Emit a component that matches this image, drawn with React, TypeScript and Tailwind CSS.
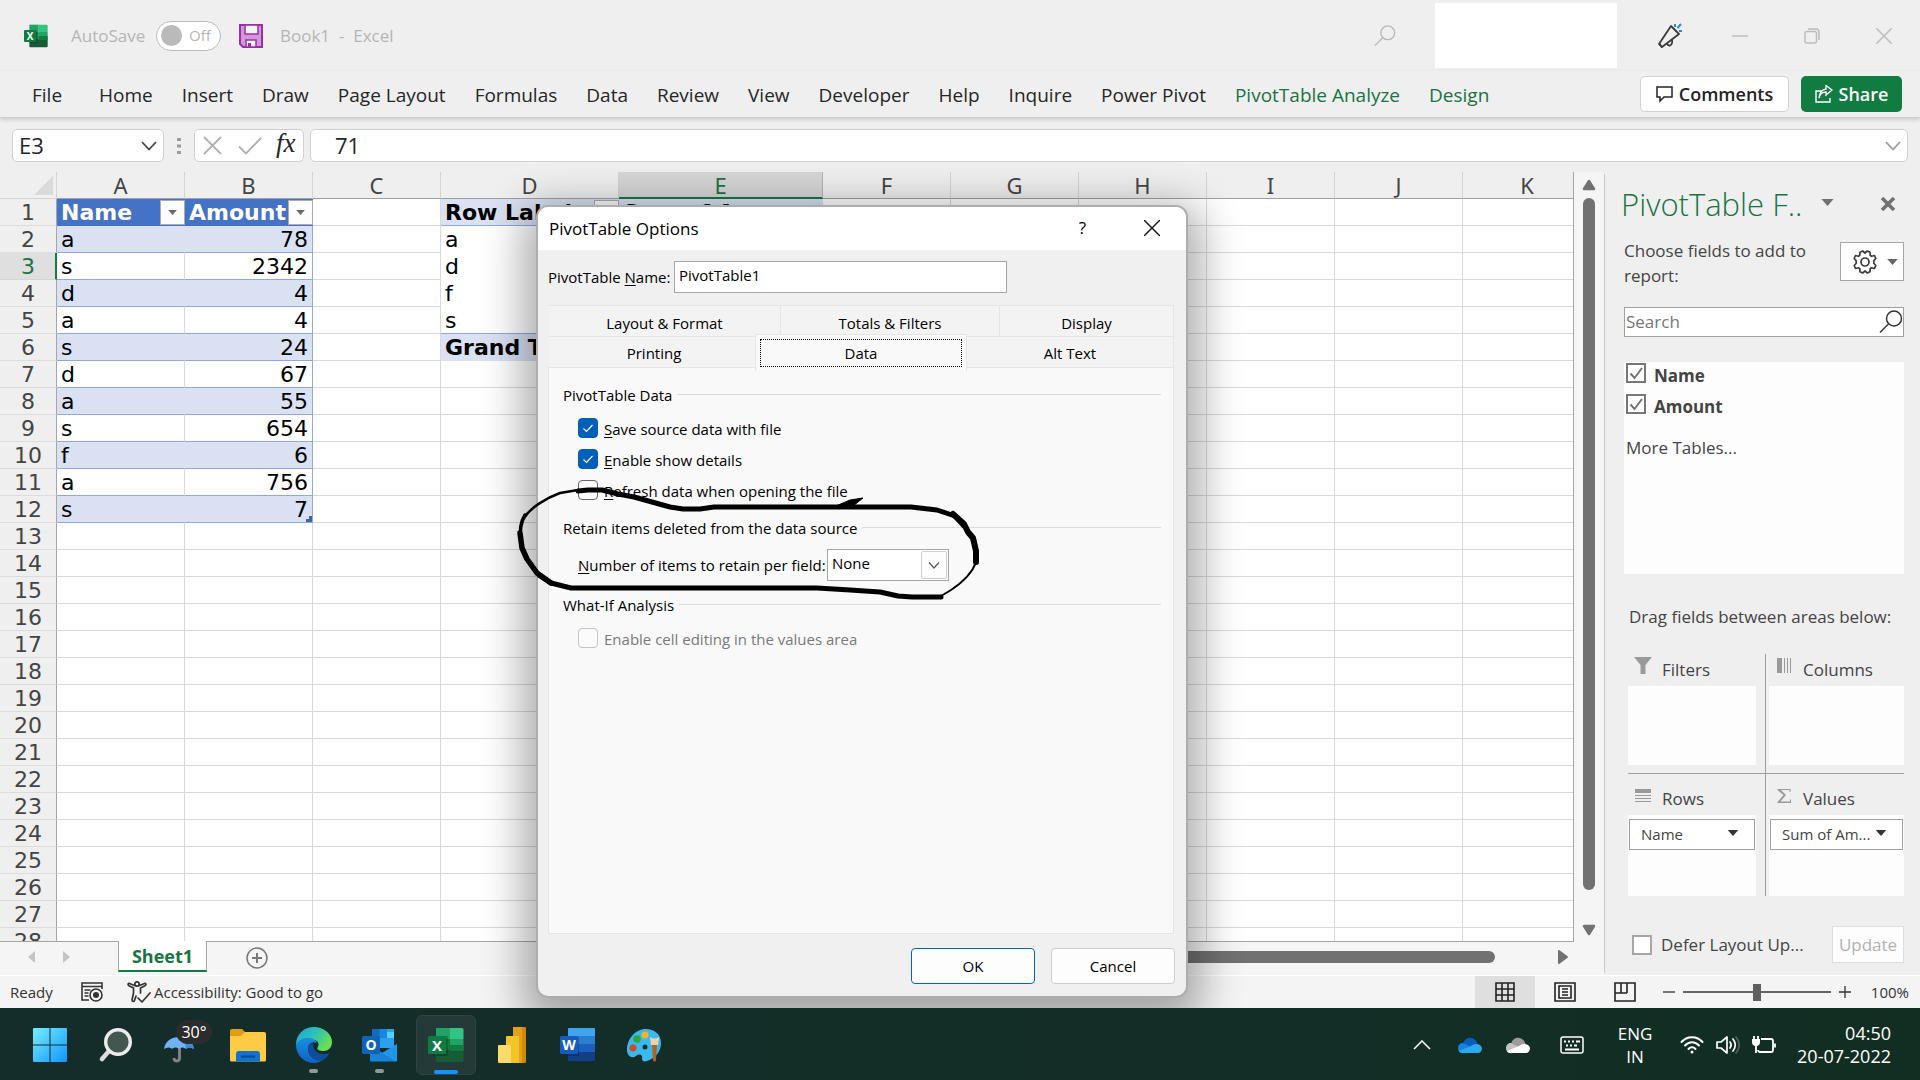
import React from "react";

const UI = "font-['Open_Sans','Liberation_Sans',sans-serif]";

/* ---------- small glyphs ---------- */

function Triangle({ className = "" }: { className?: string }) {
  return (
    <svg viewBox="0 0 14 8" className={className} aria-hidden="true">
      <path d="M0 0h14L7 8z" fill="currentColor" />
    </svg>
  );
}

function ExcelLogo({ className = "" }: { className?: string }) {
  return (
    <svg viewBox="0 0 36 36" className={className} aria-hidden="true">
      <path d="M8 1h14v11H8z" fill="#21a366" />
      <path d="M22 1h12a1.500 1.500 0 0 1 1.500 1.500V12H22z" fill="#33c481" />
      <path d="M8 12h14v12H8z" fill="#107c41" />
      <path d="M22 12h13.500v11H22z" fill="#21a366" />
      <path d="M8 23h27.500v10.500A1.500 1.500 0 0 1 34 35H9.500A1.500 1.500 0 0 1 8 33.500z" fill="#185c37" />
      <path d="M22 18h13.500v6H22z" fill="#107c41" />
      <rect x="8" y="9" width="12" height="20" fill="#000" opacity=".2" />
      <rect x="0" y="9" width="18" height="18" rx="1.500" fill="#107c41" />
      <text x="9" y="23.500" textAnchor="middle" fontSize="15" fontWeight="700" fill="#fff" fontFamily="Open Sans, sans-serif">
        X
      </text>
    </svg>
  );
}

function SearchGlyph({ className = "" }: { className?: string }) {
  return (
    <svg viewBox="0 0 24 24" className={className} fill="none" stroke="currentColor" strokeWidth="1.500" aria-hidden="true">
      <circle cx="15" cy="8.500" r="7.500" />
      <path d="M9.500 14L1 22.500" />
    </svg>
  );
}

/* ---------- title bar and ribbon ---------- */

function TitleBar() {
  return (
    <header className="flex h-[71px] shrink-0 items-center text-[17px] text-[#b5b5b5]">
      <ExcelLogo className="ml-6 size-6" />
      <span className="ml-[23px] w-[77px] text-[17px]">AutoSave</span>
      <button
        type="button"
        role="switch"
        aria-checked="false"
        aria-label="AutoSave"
        className="ml-2 flex h-[30px] w-[65px] items-center gap-[7px] rounded-full border border-[#bcbcbc] bg-white pl-1 text-[15px]"
      >
        <span className="size-[21px] rounded-full bg-[#bababa]" />
        Off
      </button>
      <button type="button" aria-label="Save" className="ml-[18px]">
        <svg viewBox="0 0 24 24" className="size-6" aria-hidden="true">
          <path d="M1 1h22v22H4l-3-3z" fill="#d595dc" stroke="#9a2fa5" strokeWidth="2" />
          <path d="M6 1h13v9H6z" fill="#f4f4f4" stroke="#9a2fa5" strokeWidth="1.500" />
          <path d="M7 16h10v7H7z" fill="#fff" stroke="#9a2fa5" strokeWidth="1.500" />
          <path d="M9 19h3v4H9z" fill="#9a2fa5" />
        </svg>
      </button>
      <h1 className="ml-[17px] whitespace-pre">Book1  -  Excel</h1>
      <button type="button" aria-label="Search" className="ml-auto mr-[39px]">
        <SearchGlyph className="size-[22px] text-[#b9b9b9]" />
      </button>
      <div className="h-[65px] w-[182px] bg-white" />
      <button type="button" aria-label="Coming soon" className="ml-10">
        <svg viewBox="0 0 26 26" className="size-[26px]" fill="none" stroke="#3b3b3b" strokeWidth="1.800" aria-hidden="true">
          <path d="M14 3l8 8L5 24l-3-3zM2.500 20.500L5 24.500" strokeLinejoin="round" />
          <path d="M10 20.500c1 3.500 6 2.500 5-3.500" />
          <path d="M18 1v3M24 1l-3.500 4M22 8h3" stroke="#2b88d8" strokeWidth="2" />
        </svg>
      </button>
      <button type="button" aria-label="Minimize" className="ml-[49px]">
        <svg viewBox="0 0 16 16" className="size-4" stroke="#bdbdbd" strokeWidth="1.500" aria-hidden="true">
          <path d="M0 8h16" />
        </svg>
      </button>
      <button type="button" aria-label="Restore" className="ml-14">
        <svg viewBox="0 0 16 16" className="size-4" fill="none" stroke="#bdbdbd" strokeWidth="1.500" aria-hidden="true">
          <rect x="1" y="3.500" width="11.500" height="11.500" rx="2" />
          <path d="M4 1h8a3 3 0 0 1 3 3v8" />
        </svg>
      </button>
      <button type="button" aria-label="Close" className="ml-14 mr-7">
        <svg viewBox="0 0 16 16" className="size-4" stroke="#bdbdbd" strokeWidth="1.500" aria-hidden="true">
          <path d="M0 0l16 16M16 0L0 16" />
        </svg>
      </button>
    </header>
  );
}

const RIBBON = [
  "File", "Home", "Insert", "Draw", "Page Layout", "Formulas", "Data", "Review",
  "View", "Developer", "Help", "Inquire", "Power Pivot", "PivotTable Analyze", "Design",
];

function Ribbon() {
  return (
    <nav className="relative z-10 flex h-[47px] shrink-0 items-center border-b border-[#cfcfcf] text-[18px] text-[#262626] shadow-[0_2px_4px_rgba(0,0,0,0.14)]">
      <div className="ml-8 flex gap-[29px] pt-0.5 text-[19px] whitespace-nowrap">
        {RIBBON.map((t, i) => (
          <button key={t} type="button" className={i === 0 ? "mr-2" : i > 12 ? "text-[#197343]" : ""}>
            {t}
          </button>
        ))}
      </div>
      <button
        type="button"
        className="ml-auto flex h-9 w-[149px] items-center justify-center gap-1.5 rounded-[5px] border border-[#d0d0d0] bg-white font-semibold text-[#242424]"
      >
        <svg viewBox="0 0 17 17" className="size-[17px]" fill="none" stroke="#242424" strokeWidth="1.500" aria-hidden="true">
          <path d="M1 1h15v10H8l-4 4v-4H1z" />
        </svg>
        Comments
      </button>
      <button
        type="button"
        className="ml-3 mr-[18px] flex h-9 w-[101px] items-center justify-center gap-1.5 rounded-[5px] bg-[#107c41] font-semibold text-white"
      >
        <svg viewBox="0 0 18 18" className="size-[18px]" fill="none" stroke="#fff" strokeWidth="1.400" aria-hidden="true">
          <path d="M6 6H1v11h14v-4" />
          <path d="M4 13c1-4 3.500-6 7-6V10l6-5-6-4.500V4C6.500 4.500 4.500 8 4 13z" />
        </svg>
        Share
      </button>
    </nav>
  );
}

function FormulaBar() {
  return (
    <div className="flex h-[54px] shrink-0 items-center pt-px pr-3 pl-3 text-[22px] text-[#262626]">
      <button
        type="button"
        className="flex h-[33px] w-[152px] items-center justify-between rounded-[5px] border border-[#d0d0d0] bg-white px-1.5"
      >
        E3
        <svg viewBox="0 0 16 10" className="h-[10px] w-4" fill="none" stroke="#444" strokeWidth="1.800" aria-hidden="true">
          <path d="M1 1l7 7.500L15 1" />
        </svg>
      </button>
      <svg viewBox="0 0 4 16" className="mx-[13px] h-4 w-1" fill="#9b9b9b" aria-hidden="true">
        <path d="M0 0h4v3H0zM0 6.500h4v3H0zM0 13h4v3H0z" />
      </svg>
      <div className="flex h-[33px] w-[110px] items-center gap-4 rounded-[5px] border border-[#d0d0d0] bg-white pl-2">
        <button type="button" aria-label="Cancel entry">
          <svg viewBox="0 0 19 19" className="size-[19px]" stroke="#b0b0b0" strokeWidth="1.800" aria-hidden="true">
            <path d="M1 1l17 17M18 1L1 18" />
          </svg>
        </button>
        <button type="button" aria-label="Enter">
          <svg viewBox="0 0 24 18" className="h-[18px] w-6" fill="none" stroke="#b0b0b0" strokeWidth="1.800" aria-hidden="true">
            <path d="M1 9.500l7 7L23 1" />
          </svg>
        </button>
        <button type="button" className="-ml-0.5 pb-1 font-['Liberation_Serif',serif] text-[27px] leading-none italic">
          fx
        </button>
      </div>
      <div className="ml-[6px] flex h-[33px] flex-1 items-center rounded-[5px] border border-[#d0d0d0] bg-white pl-6 pr-1.5">
        <input aria-label="Formula" defaultValue="71" className="min-w-0 flex-1 bg-transparent outline-none" />
        <svg viewBox="0 0 16 10" className="h-[10px] w-4" fill="none" stroke="#999" strokeWidth="1.800" aria-hidden="true">
          <path d="M1 1l7 7.500L15 1" />
        </svg>
      </div>
    </div>
  );
}

/* ---------- worksheet ---------- */

const COLUMNS = ["A", "B", "C", "D", "E", "F", "G", "H", "I", "J", "K"];
const DATA: Record<number, [string, string]> = {
  2: ["a", "78"], 3: ["s", "2342"], 4: ["d", "4"], 5: ["a", "4"], 6: ["s", "24"], 7: ["d", "67"],
  8: ["a", "55"], 9: ["s", "654"], 10: ["f", "6"], 11: ["a", "756"], 12: ["s", "7"],
};
const PIVOT: Record<number, string> = { 1: "Row Labels", 2: "a", 3: "d", 4: "f", 5: "s", 6: "Grand Total" };

function FilterButton({ label }: { label: string }) {
  return (
    <button
      type="button"
      aria-label={label}
      className="absolute top-px right-0 flex size-[25px] items-center justify-center border border-[#acacac] bg-[#fcfcfc]"
    >
      <Triangle className="h-[5px] w-[9px] text-[#6b6b6b]" />
    </button>
  );
}

function Cell({ row, col }: { row: number; col: string }) {
  if ((col === "A" || col === "B") && row === 1) {
    return (
      <td className="relative border-b border-[#4472c4] bg-[#4472c4] px-1 pt-0.5 pb-0 font-bold text-white">
        {col === "A" ? "Name" : "Amount"}
        <FilterButton label={"Filter column " + col} />
      </td>
    );
  }
  if ((col === "A" || col === "B") && row <= 12) {
    const even = row % 2 === 0;
    const tone = even ? "bg-[#d9e1f2]" : "bg-white";
    if (col === "A") {
      return (
        <td className={`${tone} border-r border-b border-b-[#8ea9db] px-1 pt-0.5 pb-0 ${even ? "border-r-[#d9e1f2]" : "border-r-[#d9d9d9]"}`}>
          {DATA[row][0]}
        </td>
      );
    }
    return (
      <td className={`${tone} relative border-r border-b border-[#8ea9db] px-1 pt-0.5 pb-0 text-right`}>
        {DATA[row][1]}
        {row === 12 && <span className="absolute right-0 bottom-0 size-1.5 bg-[#3f62b5] [clip-path:polygon(50%_0,100%_0,100%_100%,0_100%,0_50%,50%_50%)]" />}
      </td>
    );
  }
  if ((col === "D" || col === "E") && row <= 6) {
    const band = row === 1 || row === 6;
    const edge = row === 1 || row === 5 ? "border-[#8ea9db]" : row === 6 ? "border-[#d9e1f2]" : "border-white";
    return (
      <td className={`relative border-b px-1 pt-0.5 pb-0 ${edge} ${band ? "bg-[#d9e1f2] font-bold" : "bg-white"}`}>
        {col === "D" ? PIVOT[row] : row === 1 ? "Sum of Amount" : ""}
        {col === "D" && row === 1 && <FilterButton label="Filter row labels" />}
      </td>
    );
  }
  return <td className="border-r border-b border-[#d9d9d9] bg-white" />;
}

function Worksheet() {
  return (
    <div className="min-h-0 min-w-0 flex-1 overflow-hidden border-r border-b border-[#a6a6a6]">
      <table className="w-[1592px] table-fixed border-separate border-spacing-0 font-['DejaVu_Sans','Liberation_Sans',sans-serif] text-[22px] leading-[24px] text-black">
        <colgroup>
          <col className="w-[57px]" />
          <col className="w-32" />
          <col className="w-32" />
          <col className="w-32" />
          <col className="w-[178px]" />
          <col className="w-[204px]" />
          <col className="w-32" />
          <col className="w-32" />
          <col className="w-32" />
          <col className="w-32" />
          <col className="w-32" />
          <col />
        </colgroup>
        <thead>
          <tr className="h-[27px] font-['Noto_Sans',sans-serif] text-[#444]">
            <th className="border-r border-b border-[#d4d4d4] bg-[#efefef] p-0">
              <svg viewBox="0 0 19 19" className="mr-[3px] ml-auto size-[19px]" aria-hidden="true">
                <path d="M19 0v19H0z" fill="#dadada" />
              </svg>
            </th>
            {COLUMNS.map((c) => (
              <th
                key={c}
                scope="col"
                className={
                  c === "E"
                    ? "border-r border-b-2 border-r-[#b5b5b5] border-b-[#107c41] bg-[#d6d6d6] p-0 leading-[24px] font-normal text-[#197343]"
                    : "border-r border-b border-r-[#d4d4d4] border-b-[#a0a0a0] bg-[#efefef] p-0 leading-[24px] font-normal"
                }
              >
                {c}
              </th>
            ))}
          </tr>
        </thead>
        <tbody>
          {Array.from({ length: 28 }, (_, i) => i + 1).map((r) => (
            <tr key={r} className="h-[27px] whitespace-nowrap">
              <th
                scope="row"
                className={
                  r === 3
                    ? "border-r-2 border-b border-r-[#107c41] border-b-[#d4d4d4] bg-[#dfdfdf] p-0 pt-0.5 pl-px font-normal text-[#197343]"
                    : "border-r border-b border-r-[#a6a6a6] border-b-[#dcdcdc] bg-[#efefef] p-0 pt-0.5 font-normal text-[#444]"
                }
              >
                {r}
              </th>
              {COLUMNS.map((c) => (
                <Cell key={c} row={r} col={c} />
              ))}
            </tr>
          ))}
        </tbody>
      </table>
    </div>
  );
}

function SheetTabs() {
  return (
    <div className="flex h-[33px] shrink-0 items-start bg-[#f5f5f5]">
      <button type="button" aria-label="Previous sheet" className="mt-[9px] ml-7">
        <svg viewBox="0 0 7 12" className="h-3 w-[7px]" aria-hidden="true"><path d="M7 0v12L0 6z" fill="#c4c4c4" /></svg>
      </button>
      <button type="button" aria-label="Next sheet" className="mt-[9px] ml-7">
        <svg viewBox="0 0 7 12" className="h-3 w-[7px]" aria-hidden="true"><path d="M0 0v12l7-6z" fill="#c4c4c4" /></svg>
      </button>
      <button
        type="button"
        className="relative -mt-px ml-12 h-[31px] w-[89px] border-x border-b-2 border-x-[#a6a6a6] border-b-[#107c41] bg-white text-[18px] leading-[26px] font-bold text-[#197343]"
      >
        Sheet1
      </button>
      <button type="button" aria-label="New sheet" className="mt-[5px] ml-[39px]">
        <svg viewBox="0 0 22 22" className="size-[22px]" fill="none" stroke="#777" strokeWidth="1.500" aria-hidden="true">
          <circle cx="11" cy="11" r="10" />
          <path d="M11 6v10M6 11h10" strokeWidth="2" />
        </svg>
      </button>
      <div className="mt-[9px] ml-[400px] h-3 flex-1 rounded-full bg-[#717171]" />
      <svg viewBox="0 0 10 14" className="mt-2 mr-[36px] ml-[63px] h-[14px] w-[10px] text-[#717171]" aria-hidden="true">
        <path d="M1 1v12l8-6z" fill="currentColor" stroke="currentColor" strokeLinejoin="round" strokeWidth="2" />
      </svg>
    </div>
  );
}

function VerticalScroll() {
  return (
    <div className="ml-[2px] flex w-7 shrink-0 flex-col items-center rounded-t-xl bg-[#f5f5f5] pt-[7px] pr-0.5 pb-[6px] text-[#717171]">
      <svg viewBox="0 0 14 12" className="h-3 w-[14px]" aria-hidden="true">
        <path d="M7 2l5 8H2z" fill="currentColor" stroke="currentColor" strokeLinejoin="round" strokeWidth="2.500" />
      </svg>
      <div className="mt-[7px] w-3 flex-1 rounded-full bg-[#717171]" />
      <svg viewBox="0 0 14 12" className="mt-[34px] h-3 w-[14px]" aria-hidden="true">
        <path d="M2 2h10l-5 8z" fill="currentColor" stroke="currentColor" strokeLinejoin="round" strokeWidth="2.500" />
      </svg>
    </div>
  );
}

/* ---------- field list pane ---------- */

function PaneCheck({ id, label }: { id: string; label: string }) {
  return (
    <div className="flex h-[31px] items-start gap-2 pl-0.5">
      <span className="relative mt-px size-5 shrink-0">
        <input id={id} type="checkbox" defaultChecked className="peer size-5 appearance-none border-2 border-[#777] bg-white" />
        <svg viewBox="0 0 20 20" className="pointer-events-none absolute inset-0 hidden size-5 peer-checked:block" fill="none" stroke="#737373" strokeWidth="2" aria-hidden="true">
          <path d="M4.500 10.500l4 4.500L16 5" />
        </svg>
      </span>
      <label htmlFor={id} className="pt-[3px] text-[17px] leading-[22px] font-bold text-[#444]">{label}</label>
    </div>
  );
}

function AreaTitle({ icon, children }: { icon: React.ReactNode; children: string }) {
  return (
    <h3 className="flex h-8 items-center gap-[10px] pl-1.5 text-[17px] text-[#444]">
      <svg viewBox="0 0 18 18" className="mb-2 size-[18px] text-[#9a9a9a]" aria-hidden="true">{icon}</svg>
      {children}
    </h3>
  );
}

function Chip({ children }: { children: string }) {
  return (
    <button type="button" className="flex h-[31px] w-full items-center justify-between border border-[#a0a0a0] bg-white pr-[15px] pl-[11px] text-[15px] text-[#444]">
      {children}
      <Triangle className="mb-1 h-[6px] w-3 shrink-0 text-[#333]" />
    </button>
  );
}

function FieldPane() {
  return (
    <aside className="flex w-[315px] shrink-0 flex-col bg-[#efefef] pr-4 pl-[19px] text-[#444]">
      <div className="mt-3 flex h-10 items-center">
        <h2 className="-ml-[3px] w-[184px] text-[31px] font-light whitespace-nowrap text-[#197343]">PivotTable F..</h2>
        <Triangle className="mt-[-4px] ml-4 h-[7px] w-[13px] text-[#717171]" />
        <button type="button" aria-label="Close pane" className="mr-[9px] ml-auto">
          <svg viewBox="0 0 14 14" className="size-[14px]" stroke="#717171" strokeWidth="3.500" aria-hidden="true">
            <path d="M1 1l12 12M13 1L1 13" />
          </svg>
        </button>
      </div>
      <div className="mt-[14px] flex items-start justify-between">
        <p className="w-[200px] text-[17px] leading-[25px] whitespace-nowrap">Choose fields to add to<br />report:</p>
        <button type="button" aria-label="Tools" className="mt-1 flex h-[39px] w-16 items-center gap-[10px] border border-[#a6a6a6] bg-white pl-3">
          <svg viewBox="0 0 24 24" className="size-6" fill="none" stroke="#3b3b3b" strokeWidth="1.700" strokeLinejoin="round" aria-hidden="true">
            <path d="M7 2.200L9.700 1l2.300 2 2.300-2L17 2.200l.2 3.200 1.300.9 3-.8 1.300 3-2 2.300v2.400l2 2.300-1.300 3-3-.8-1.300.9-.2 3.200-2.700 1.200-2.300-2-2.300 2L7 21.800l-.2-3.200-1.300-.9-3 .8-1.300-3 2-2.300v-2.400l-2-2.300 1.300-3 3 .8 1.300-.9z" />
            <circle cx="12" cy="12" r="4" />
          </svg>
          <Triangle className="h-[6px] w-[11px] text-[#666]" />
        </button>
      </div>
      <div className="mt-[19px] flex h-[30px] items-center justify-between border border-[#a0a0a0] bg-white">
        <input aria-label="Search fields" placeholder="Search" className="min-w-0 flex-1 bg-transparent pl-px text-[17px] outline-none placeholder:text-[#767676]" />
        <SearchGlyph className="size-6 text-[#333]" />
      </div>
      <div className="mt-[25px] h-[212px] bg-[#fdfdfd]">
        <PaneCheck id="field-name" label="Name" />
        <PaneCheck id="field-amount" label="Amount" />
        <a href="#tables" className="mt-[12px] ml-0.5 inline-block text-[17px] leading-6">More Tables...</a>
      </div>
      <p className="mt-[30px] pl-[5px] text-[17px] leading-[26px] whitespace-nowrap">Drag fields between areas below:</p>
      <div className="mt-6 ml-1 grid grid-cols-[138px_1fr]">
        <section className="h-[120px] border-r border-b border-[#a0a0a0] pr-[9px]">
          <AreaTitle icon={<path d="M0 0h18l-6.500 8v9h-5V8z" fill="currentColor" />}>Filters</AreaTitle>
          <div className="h-[79px] bg-[#fdfdfd]" />
        </section>
        <section className="h-[120px] border-b border-[#a0a0a0] pl-[3px]">
          <AreaTitle icon={<path d="M2 1h5v15H2zM9 1h1v15H9zM12 1h1v15h-1zM15 1h1v15h-1z" fill="currentColor" />}>Columns</AreaTitle>
          <div className="h-[79px] bg-[#fdfdfd]" />
        </section>
        <section className="h-[122px] border-r border-[#a0a0a0] pt-[9px] pr-[9px]">
          <AreaTitle icon={<path d="M1 3h16v4H1zM1 9h16v1H1zM1 12h16v1H1zM1 15h16v1H1z" fill="currentColor" />}>Rows</AreaTitle>
          <div className="h-[81px] bg-[#fdfdfd] px-px pt-1"><Chip>Name</Chip></div>
        </section>
        <section className="h-[122px] pt-[9px] pl-[3px]">
          <AreaTitle icon={<path d="M2.500 3h13v3H14.500V4H6l5 5-5.500 6.500H15v-2h1V17H2.500v-1l6-7-6-5z" fill="currentColor" />}>Values</AreaTitle>
          <div className="h-[81px] bg-[#fdfdfd] px-px pt-1"><Chip>Sum of Am...</Chip></div>
        </section>
      </div>
      <div className="mt-[30px] flex items-center pl-2">
        <input id="defer" type="checkbox" className="size-5 appearance-none border-2 border-[#a6a6a6] bg-white" />
        <label htmlFor="defer" className="ml-[9px] text-[17px] whitespace-nowrap">Defer Layout Up...</label>
        <button type="button" disabled className="ml-auto h-[37px] w-[72px] border border-[#dedede] bg-[#fdfdfd] text-[17px] text-[#b1b1b1]">
          Update
        </button>
      </div>
    </aside>
  );
}

/* ---------- status bar ---------- */

function StatusBar() {
  return (
    <footer className="flex h-[33px] shrink-0 items-center border-t border-white bg-[#f4f4f4] text-[15px] text-[#333]">
      <span className="ml-[10px] w-[71px]">Ready</span>
      <svg viewBox="0 0 22 20" className="h-5 w-[22px]" fill="none" stroke="#333" strokeWidth="1.600" aria-hidden="true">
        <path d="M8 18H1V1h20v6M1 4.500h20M3.500 8h6M3.500 11h4M3.500 14h4" />
        <circle cx="15" cy="13" r="6" />
        <circle cx="15" cy="13" r="3" fill="#333" stroke="none" />
      </svg>
      <svg viewBox="0 0 24 22" className="ml-6 h-[22px] w-6" fill="none" stroke="#333" strokeWidth="1.700" strokeLinejoin="round" strokeLinecap="round" aria-hidden="true">
        <circle cx="10" cy="3" r="2.200" />
        <path d="M7.500 4.500L2.500 2.500C1 2.200.5 4 2 4.800L6.500 7v5L5 19c0 1.800 2 2 2.500.5L9 15M12.500 4.500l5-2c1.500-.3 2 1.500.5 2.300L13.500 7v5" />
        <path d="M11 17l4 4 8-9" />
      </svg>
      <span className="ml-[3px]">Accessibility: Good to go</span>
      <button type="button" aria-label="Normal view" className="ml-auto flex h-full w-[60px] items-center justify-center bg-[#dfdfdf]">
        <svg viewBox="0 0 20 20" className="size-5" fill="none" stroke="#222" strokeWidth="1.600" aria-hidden="true">
          <path d="M1 1h18v18H1zM1 7h18M1 13h18M7 1v18M13 1v18" />
        </svg>
      </button>
      <button type="button" aria-label="Page layout view" className="ml-[19px]">
        <svg viewBox="0 0 22 20" className="h-5 w-[22px]" fill="none" stroke="#222" strokeWidth="1.600" aria-hidden="true">
          <path d="M1 1h20v18H1zM5 4h12v12H5zM8 7h6M8 10h6M8 13h6" />
        </svg>
      </button>
      <button type="button" aria-label="Page break preview" className="ml-[38px]">
        <svg viewBox="0 0 22 20" className="h-5 w-[22px]" fill="none" stroke="#222" strokeWidth="1.600" aria-hidden="true">
          <path d="M1 1h20v18H1zM7 1v10M13 1v10M1 11h12" />
        </svg>
      </button>
      <button type="button" aria-label="Zoom out" className="ml-[27px]">
        <svg viewBox="0 0 12 12" className="size-3" stroke="#333" strokeWidth="1.300" aria-hidden="true"><path d="M0 6h12" /></svg>
      </button>
      <input
        type="range"
        aria-label="Zoom"
        min="0"
        max="100"
        defaultValue="50"
        className="mx-2 h-[17px] w-[148px] appearance-none bg-[linear-gradient(#666,#666)] bg-[length:100%_2px] bg-center bg-no-repeat [&::-webkit-slider-thumb]:h-[17px] [&::-webkit-slider-thumb]:w-2 [&::-webkit-slider-thumb]:appearance-none [&::-webkit-slider-thumb]:bg-[#606060]"
      />
      <button type="button" aria-label="Zoom in">
        <svg viewBox="0 0 12 12" className="size-3" stroke="#333" strokeWidth="1.300" aria-hidden="true"><path d="M0 6h12M6 0v12" /></svg>
      </button>
      <span className="mr-[11px] ml-[18px] w-10 text-right">100%</span>
    </footer>
  );
}

/* ---------- taskbar ---------- */

function OfficeTile({ letter, tile, bands }: { letter: string; tile: string; bands: string[] }) {
  return (
    <svg viewBox="0 0 36 36" className="size-9" aria-hidden="true">
      {bands.map((c, i) => (
        <rect key={c} x="8" y={1 + i * 8} width="27" height={i === 3 ? 9 : 8.500} rx="1" fill={c} />
      ))}
      <rect x="8" y="10" width="11" height="19" fill="#000" opacity=".2" />
      <rect x="0" y="9" width="18" height="18" rx="1.500" fill={tile} />
      <text x="9" y="23" textAnchor="middle" fontSize="14" fontWeight="700" fill="#fff" fontFamily="Open Sans, sans-serif">{letter}</text>
    </svg>
  );
}

const APPS: { name: string; state?: "open" | "active"; icon: React.ReactNode }[] = [
  {
    name: "Start",
    icon: (
      <svg viewBox="0 0 36 36" className="size-9" aria-hidden="true">
        <defs>
          <linearGradient id="win" x1="0" y1="0" x2="1" y2="1" gradientUnits="objectBoundingBox">
            <stop offset="0" stopColor="#75edff" /><stop offset="1" stopColor="#1196ff" />
          </linearGradient>
        </defs>
        <path d="M2 1h15.500v16.500H1V2a1 1 0 0 1 1-1zM18.500 1H34a1 1 0 0 1 1 1v15.500H18.500zM1 18.500h16.500V35H2a1 1 0 0 1-1-1zM18.500 18.500H35V34a1 1 0 0 1-1 1H18.500z" fill="url(#win)" />
      </svg>
    ),
  },
  {
    name: "Search",
    icon: (
      <svg viewBox="0 0 36 36" className="size-9" aria-hidden="true">
        <path d="M11 24l-7 8" stroke="#dcdcdc" strokeWidth="4.500" strokeLinecap="round" />
        <circle cx="20" cy="15" r="12.300" fill="#42574f" stroke="#ececec" strokeWidth="3.400" />
      </svg>
    ),
  },
  {
    name: "Weather",
    icon: (
      <span className="relative size-9">
        <svg viewBox="0 0 36 36" className="size-9" aria-hidden="true">
          <path d="M15.500 20v11c0 4-5.500 4-5.500 0" fill="none" stroke="#868686" strokeWidth="2.800" />
          <path d="M0 22C2 6 27 6 30 22c-3-2-6-2-8 0-3-2-5-2-7 0-2-2-5-2-7 0-2-2-5-2-8 0z" fill="#6fb3f5" />
          <path d="M15 10c8 0 14 4 15 12-3-2-6-2-8 0 0-5-3-9-7-12z" fill="#3d8ae0" />
        </svg>
        <span className="absolute -top-[7px] left-3 flex h-6 w-9 items-center justify-center rounded-full bg-[#2c2c2c] text-[16px] text-white">30°</span>
      </span>
    ),
  },
  {
    name: "File Explorer",
    icon: (
      <svg viewBox="0 0 36 36" className="h-9 w-[38px]" aria-hidden="true">
        <path d="M0 4a2 2 0 0 1 2-2h10l4 4v8H0z" fill="#e09c12" />
        <path d="M0 9h11l4-4h19a2 2 0 0 1 2 2v26a1.500 1.500 0 0 1-1.500 1.500h-33A1.500 1.500 0 0 1 0 33z" fill="#ffcb45" />
        <path d="M6 34.500V27a3 3 0 0 1 3-3h18a3 3 0 0 1 3 3v7.500z" fill="#1173cf" />
        <path d="M11 29.500h14" stroke="#0a4a96" strokeWidth="2" />
      </svg>
    ),
  },
  {
    name: "Edge",
    state: "open",
    icon: (
      <svg viewBox="0 0 36 36" className="size-9" aria-hidden="true">
        <defs>
          <linearGradient id="edgeTop" x1="0" y1="0" x2="1" y2=".5">
            <stop offset="0" stopColor="#22a3dc" /><stop offset=".55" stopColor="#2fc2b4" /><stop offset="1" stopColor="#6be04e" />
          </linearGradient>
          <linearGradient id="edgeLow" x1="0" y1="0" x2="0" y2="1">
            <stop offset="0" stopColor="#1a8fe0" /><stop offset="1" stopColor="#0f62c0" />
          </linearGradient>
        </defs>
        <path d="M0 18C0 7 8 0 18 0s18 7 18 15c0 6-4 9-8.500 9-4 0-7-1.500-6-3.500 3-4-.5-8-6-8C8 12.500 2 16 0 18z" fill="url(#edgeTop)" />
        <path d="M0 18c2-5 8-8 13.500-7 4 .5 6.500 2.500 7.500 5-5-2-9 1-9 6 0 7 8 13 16 10-3 2.500-6.500 4-10 4C8 36 0 28 0 18z" fill="url(#edgeLow)" />
        <path d="M12 22c0-4 2-6 5-7-1 6 3 12 10 12 3 0 5-.5 6.500-1.500-1 3.500-4 7-9 8.500-6 0-12.500-5-12.500-12z" fill="#0c4d9e" />
      </svg>
    ),
  },
  {
    name: "Outlook",
    state: "open",
    icon: (
      <svg viewBox="0 0 36 36" className="size-9" aria-hidden="true">
        <path d="M10 2h22v18H10z" fill="#0f6cc4" />
        <path d="M17.500 2H25v9h-7.500z" fill="#1a86dc" />
        <path d="M25 2h7v9h-7z" fill="#2ba2ee" />
        <path d="M25 5h7v7h-7z" fill="#55d0fb" />
        <path d="M17.500 11H32v10H17.500z" fill="#2b9ff0" />
        <path d="M8 18l13 8 14-9v16a1.500 1.500 0 0 1-1.500 1.500h-24A1.500 1.500 0 0 1 8 33z" fill="#1784d8" />
        <path d="M35 17v16a1.500 1.500 0 0 1-1 1.500L20 26z" fill="#1f97e6" />
        <rect x="0" y="9" width="18" height="18" rx="1.500" fill="#0f64b8" />
        <text x="9" y="23" textAnchor="middle" fontSize="14" fontWeight="700" fill="#fff" fontFamily="Open Sans, sans-serif">O</text>
      </svg>
    ),
  },
  { name: "Excel", state: "active", icon: <ExcelLogo className="size-9" /> },
  {
    name: "Power BI",
    icon: (
      <svg viewBox="0 0 36 36" className="size-9" aria-hidden="true">
        <rect x="19" y="0" width="13" height="36" rx="1.200" fill="#cf8a0c" />
        <path d="M19 0h9v36h-9z" fill="#e2a116" />
        <path d="M12 10a1 1 0 0 1 1-1h11a1 1 0 0 1 1 1v26H12z" fill="#f3c32a" />
        <path d="M4 19a1 1 0 0 1 1-1h11a1 1 0 0 1 1 1v17H5a1 1 0 0 1-1-1z" fill="#fbdc6b" />
      </svg>
    ),
  },
  { name: "Word", icon: <OfficeTile letter="W" tile="#185abd" bands={["#41a5ee", "#2b7cd3", "#1c5fbe", "#123f87"]} /> },
  {
    name: "Paint",
    icon: (
      <svg viewBox="0 0 36 36" className="size-9" aria-hidden="true">
        <path d="M20 2C9 2 1 12 1 23c0 6 5 9 9 6s7-1 6 3c0 2 2 3 5 2 9-3 14-10 14-18C35 7 28 2 20 2z" fill="#3bb8ee" />
        <circle cx="11" cy="12" r="3.800" fill="#2fa53c" />
        <circle cx="19" cy="8" r="3.500" fill="#f3b61f" />
        <circle cx="7" cy="21" r="3.500" fill="#d4462b" />
        <circle cx="19" cy="20" r="2.500" fill="#16302b" />
        <path d="M26 18h5l-1 15c0 2-3 2-3 0z" fill="#b4611b" />
        <path d="M24 10c3 2 6 2 9 0l-1 8h-7z" fill="#f1d2a4" />
      </svg>
    ),
  },
];

function Cloud({ a, b, c }: { a: string; b: string; c: string }) {
  return (
    <svg viewBox="0 0 24 18" className="h-[18px] w-6" aria-hidden="true">
      <path d="M5 8c1-5 6-8 11-5 2 1 3 3 3.500 5L12 12z" fill={a} />
      <path d="M0 12c0-3 2-5 5-5l8 4-7 6C2 18 0 15 0 12z" fill={b} />
      <path d="M13 10c3-3 10-3 11 2 0 3-2 5-4 5H5c-2 0-3-.5-4-2z" fill={c} />
    </svg>
  );
}

function Taskbar() {
  return (
    <nav className="relative z-40 flex h-[72px] shrink-0 items-center bg-linear-to-r from-[#142d2b] to-[#122e23] pt-px text-white">
      <div className="ml-[17px] flex">
        {APPS.map((app) => (
          <button key={app.name} type="button" aria-label={app.name} className="relative mx-[3px] flex h-[60px] w-[60px]">
            <span className={`flex size-[60px] items-center justify-center rounded-md ${app.state === "active" ? "border border-[#2f4542] bg-[#233a38]" : ""}`}>
              {app.icon}
            </span>
            {app.state === "open" && <span className="absolute bottom-0.5 left-[25px] h-1 w-[9px] rounded-full bg-[#8e9a98]" />}
            {app.state === "active" && <span className="absolute bottom-px left-[18px] h-1 w-6 rounded-full bg-[#1592ff]" />}
          </button>
        ))}
      </div>
      <div className="mr-[29px] ml-auto flex items-center">
        <button type="button" aria-label="Hidden icons">
          <svg viewBox="0 0 18 10" className="h-[10px] w-[18px]" fill="none" stroke="#fff" strokeWidth="1.600" aria-hidden="true"><path d="M1 9l8-8 8 8" /></svg>
        </button>
        <span className="ml-[27px]"><Cloud a="#0a5cbc" b="#1683dc" c="#2aaaf0" /></span>
        <span className="ml-6"><Cloud a="#9b9b9b" b="#c4c4c4" c="#fff" /></span>
        <svg viewBox="0 0 24 18" className="ml-[30px] h-[18px] w-6" fill="none" stroke="#fff" strokeWidth="1.500" aria-hidden="true">
          <rect x="1" y="1" width="22" height="16" rx="2" />
          <path d="M4 5.500h2M8 5.500h2M12 5.500h2M16 5.500h4M6 9.500h2M10 9.500h2M14 9.500h3M5 13.500h14" strokeWidth="1.800" />
        </svg>
        <div className="ml-[25px] w-[52px] text-center text-[17px] leading-[23px]">ENG<br />IN</div>
        <svg viewBox="0 0 24 20" className="ml-[19px] h-5 w-6" fill="none" stroke="#fff" strokeWidth="2" strokeLinecap="round" aria-hidden="true">
          <path d="M1.500 7C7 .500 17 .500 22.500 7M5 10.500c4-4.500 10-4.500 14 0M8.500 14c2-2.300 5-2.300 7 0" />
          <circle cx="12" cy="17" r="1.500" fill="#fff" stroke="none" />
        </svg>
        <svg viewBox="0 0 24 20" className="ml-3 h-5 w-6" fill="none" stroke="#fff" strokeWidth="1.700" strokeLinejoin="round" strokeLinecap="round" aria-hidden="true">
          <path d="M1 7h4l6-5v16l-6-5H1zM14 7c1.500 2 1.500 4 0 6M17 4c3 4 3 8 0 12" />
          <path d="M20 2c4 5 4 11 0 16" stroke="#4c6460" />
        </svg>
        <svg viewBox="0 0 26 20" className="ml-3 h-5 w-[26px]" fill="none" stroke="#fff" strokeWidth="1.800" aria-hidden="true">
          <path d="M9 4h10a2 2 0 0 1 2 2v9a2 2 0 0 1-2 2H8a2 2 0 0 1-2-2M23 8.500v4" />
          <path d="M2 1v4M6 1v4M4 9v9" />
          <path d="M0 4h8v3a4 4 0 0 1-8 0z" fill="#fff" stroke="none" />
        </svg>
        <div className="ml-[17px] w-24 text-right text-[18px] leading-[23px] whitespace-nowrap">04:50<br />20-07-2022</div>
      </div>
    </nav>
  );
}

/* ---------- dialog ---------- */

function DialogCheck({ id, accel, rest, checked, disabled }: { id: string; accel: string; rest: string; checked?: boolean; disabled?: boolean }) {
  return (
    <div className={`flex h-[31px] items-center gap-1.5 pl-[15px] ${disabled ? "text-[#7a7a7a]" : ""}`}>
      <span className="relative size-5 shrink-0">
        <input
          id={id}
          type="checkbox"
          defaultChecked={checked}
          disabled={disabled}
          className="peer block size-5 appearance-none rounded-[4px] border border-[#666] bg-[#fbfbfb] checked:border-[#005fb8] checked:bg-[#005fb8] disabled:border-[#c3c3c3]"
        />
        <svg viewBox="0 0 20 20" className="pointer-events-none absolute inset-0 hidden size-5 peer-checked:block" fill="none" stroke="#fff" strokeWidth="1.200" aria-hidden="true">
          <path d="M5.500 10.500l3 3 6-6.500" />
        </svg>
      </span>
      <label htmlFor={id} className="pt-0.5"><span className={disabled ? "" : "underline underline-offset-2"}>{accel}</span>{rest}</label>
    </div>
  );
}

function GroupTitle({ children }: { children: string }) {
  return (
    <h3 className="flex h-[22px] items-center gap-[5px] whitespace-nowrap">
      {children}
      <span className="mb-0.5 h-px flex-1 bg-[#dcdcdc]" />
    </h3>
  );
}

function PivotOptionsDialog() {
  return (
    <section
      role="dialog"
      aria-label="PivotTable Options"
      className="absolute top-[205px] left-[536px] z-30 flex h-[793px] w-[652px] flex-col rounded-xl border-2 border-[#adadad] bg-[#f0f0f0] text-[15px] leading-[22px] text-black shadow-[0_14px_42px_14px_rgba(0,0,0,0.32)]"
    >
      <header className="flex h-[43px] shrink-0 items-center rounded-t-[10px] bg-white pl-[11px] text-[17px]">
        <h2>PivotTable Options</h2>
        <button type="button" aria-label="Help" className="ml-auto pb-0.5 text-[17px]">?</button>
        <button type="button" aria-label="Close" className="mr-[26px] ml-[58px] pb-0.5">
          <svg viewBox="0 0 16 16" className="size-4" stroke="#111" strokeWidth="1.400" aria-hidden="true"><path d="M0 0l16 16M16 0L0 16" /></svg>
        </button>
      </header>
      <div className="mt-[11px] flex items-center pl-[10px]">
        <label htmlFor="pt-name" className="w-[126px] whitespace-nowrap">PivotTable <span className="underline underline-offset-2">N</span>ame:</label>
        <input id="pt-name" defaultValue="PivotTable1" className="h-8 w-[333px] border border-[#a6a6a6] bg-white px-1 pb-1 outline-none" />
      </div>
      <div role="tablist" className="mt-3 mr-3 ml-[11px]">
        <div className="grid h-[31px] grid-cols-[232px_219px_1fr] border-t border-r border-[#e5e5e5] bg-[#f3f3f3]">
          <button type="button" role="tab" aria-selected="false" className="border-r border-[#e5e5e5] pt-1">Layout &amp; Format</button>
          <button type="button" role="tab" aria-selected="false" className="border-r border-[#e5e5e5] pt-1">Totals &amp; Filters</button>
          <button type="button" role="tab" aria-selected="false" className="pt-1">Display</button>
        </div>
        <div className="grid h-[31px] grid-cols-[206px_212px_1fr] border-t border-r border-[#e5e5e5] bg-[#f3f3f3]">
          <button type="button" role="tab" aria-selected="false" className="pb-0.5 pl-1">Printing</button>
          <button type="button" role="tab" aria-selected="true" className="relative -mt-[3px] -mb-px border-x border-t border-[#e5e5e5] bg-[#f9f9f9] p-1">
            <span className="block h-[28px] border border-dotted border-black leading-[26px]">Data</span>
          </button>
          <button type="button" role="tab" aria-selected="false" className="pb-0.5">Alt Text</button>
        </div>
      </div>
      <div role="tabpanel" className="mr-3 ml-[10px] flex-1 border border-[#e5e5e5] bg-[#f9f9f9] pt-4 pr-3 pl-[14px]">
        <GroupTitle>PivotTable Data</GroupTitle>
        <div className="mt-[6px]">
          <DialogCheck id="save-src" accel="S" rest="ave source data with file" checked />
          <DialogCheck id="show-det" accel="E" rest="nable show details" checked />
          <DialogCheck id="refresh" accel="R" rest="efresh data when opening the file" />
        </div>
        <div className="mt-3"><GroupTitle>Retain items deleted from the data source</GroupTitle></div>
        <div className="mt-[10px] flex items-center pl-[15px]">
          <label htmlFor="retain" className="w-[249px] whitespace-nowrap"><span className="underline underline-offset-2">N</span>umber of items to retain per field:</label>
          <span className="relative">
            <select id="retain" defaultValue="None" className="block h-8 w-[122px] appearance-none border border-[#a6a6a6] bg-white pb-1 pl-1 outline-none">
              <option>Automatic</option>
              <option>None</option>
              <option>Max</option>
            </select>
            <span className="pointer-events-none absolute top-0.5 right-0.5 flex h-7 w-[26px] items-center justify-center rounded-[2px] border border-[#cfcfcf] bg-[#fdfdfd]">
              <svg viewBox="0 0 12 7" className="h-[7px] w-3" fill="none" stroke="#555" strokeWidth="1.200" aria-hidden="true"><path d="M1 .500l5 5.500 5-5.500" /></svg>
            </span>
          </span>
        </div>
        <div className="mt-[13px]"><GroupTitle>What-If Analysis</GroupTitle></div>
        <div className="mt-[6px]"><DialogCheck id="cell-edit" accel="E" rest="nable cell editing in the values area" disabled /></div>
      </div>
      <footer className="mt-[14px] mr-[11px] mb-3 flex h-9 shrink-0 justify-end gap-4">
        <button type="button" className="w-[124px] rounded-[4px] border border-[#0067c0] bg-[#fdfdfd]">OK</button>
        <button type="button" className="w-[124px] rounded-[4px] border border-[#cfcfcf] bg-[#fdfdfd]">Cancel</button>
      </footer>
    </section>
  );
}

/* Hand-drawn ring around the retain option. */
function InkRing() {
  return (
    <svg viewBox="0 0 480 130" className="pointer-events-none absolute top-[480px] left-[510px] z-30 h-[130px] w-[480px]" fill="none" stroke="#000" strokeLinecap="round" strokeLinejoin="round" aria-hidden="true">
      <path d="M68 11L78 10L92 10L108 14L124 17L142 22L160 27L173 29L190 29L204 27L329 27L401 27L427 30L445 36L454 46" strokeWidth="5" />
      <path d="M443 34L454 44L458 52L463 58L466 71L466 82" strokeWidth="6" />
      <path d="M466 82C462 94 450 104 441 110L431 116" strokeWidth="2" />
      <path d="M431 117L402 117L388 116L370 112L340 110L307 108L61 108L41 103L30 96" strokeWidth="5" />
      <path d="M41 103L27 93L17 79L12 68L10 53" strokeWidth="5.500" />
      <path d="M11 60C9 48 12 40 15 35" strokeWidth="3.500" />
      <path d="M14 38C20 28 36 18 50 13L68 10" strokeWidth="2.500" />
      <path d="M326 26l14-6 13-2-10 8z" fill="#000" strokeWidth="1" />
    </svg>
  );
}

export default function App() {
  return (
    <div className={`relative flex h-screen flex-col overflow-hidden bg-[#efefef] ${UI}`}>
      <TitleBar />
      <Ribbon />
      <FormulaBar />
      <main className="flex min-h-0 flex-1">
        <div className="flex min-w-0 flex-1 flex-col bg-[#f5f5f5]">
          <div className="flex min-h-0 flex-1">
            <Worksheet />
            <VerticalScroll />
          </div>
          <SheetTabs />
        </div>
        <div className="mt-0.5 mb-0.5 w-px shrink-0 bg-[#c9c9c9]" />
        <FieldPane />
      </main>
      <StatusBar />
      <Taskbar />
      <PivotOptionsDialog />
      <InkRing />
    </div>
  );
}
